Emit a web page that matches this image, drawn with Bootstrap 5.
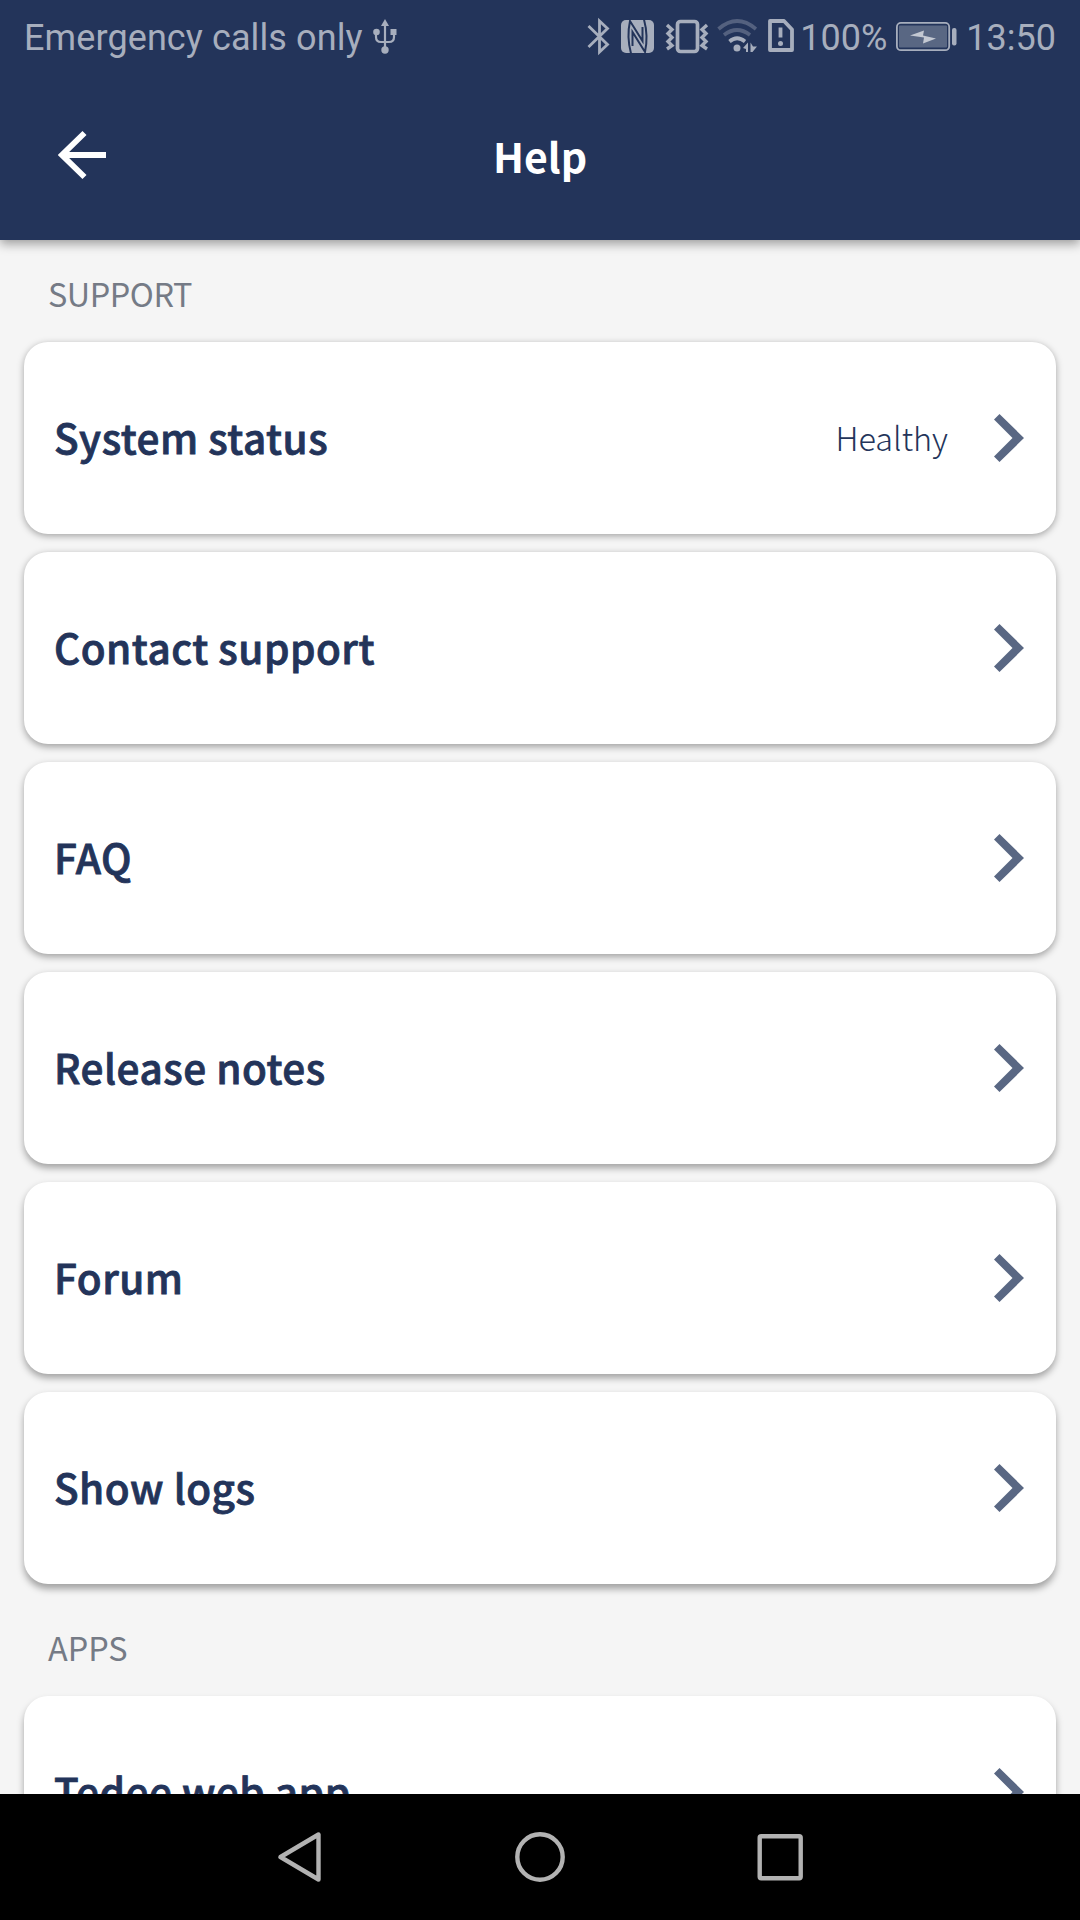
<!DOCTYPE html>
<html lang="en">
<head>
<meta charset="utf-8">
<meta name="viewport" content="width=device-width, initial-scale=1">
<title>Help</title>
<link href="https://cdn.jsdelivr.net/npm/bootstrap@5.3.0/dist/css/bootstrap.min.css" rel="stylesheet">
<style>
:root { --navy: #23345a; --soft: #a7aebd; }
body { background: #f5f5f5; font-family: "Noto Sans CJK SC", "Noto Sans", sans-serif; color: var(--navy); }
svg { display: block; flex: none; }
.screen { width: 1080px; height: 1920px; }
.app-header { background: var(--navy); height: 240px; box-shadow: 0 4px 10px rgba(0,0,0,.36); z-index: 2; }
.status-bar { height: 72px; padding: 0 24px; font: 400 36px/72px Roboto, sans-serif; color: var(--soft); }
.status-bar span { padding-top: 3px; }
.status-bar svg { height: 72px; }
.carrier { letter-spacing: .1px; }
.title-row { display: grid; grid-template-columns: 1fr auto 1fr; height: 168px; padding: 0 58px; }
.page-title { font-size: 41px; font-weight: 700; line-height: 60px; margin: 0; padding-bottom: 3px; }
.back { padding-bottom: 2px; }
.section-label { font-size: 32.4px; line-height: 48px; color: #757b86; padding-left: 24px; }
.first-label { padding-top: 29px; height: 102px; letter-spacing: -.45px; }
.second-label { padding-top: 39px; height: 112px; }
.option { height: 192px; border: 0; border-radius: 24px; padding: 0 32px 0 30px; box-shadow: 0 var(--dy, 2px) 7px rgba(0,0,0,.34); color: inherit; text-decoration: none; }
.option-title { font-size: 40.5px; font-weight: 500; line-height: 60px; padding-bottom: 3px; letter-spacing: .5px; -webkit-text-stroke: .8px var(--navy); }
.option-value { font-size: 32.4px; font-weight: 300; line-height: 48px; margin-right: 46px; padding-bottom: 3px; }
.stack { gap: 18px; }
.stack .option:nth-child(2) { --dy: 2.5px; }
.stack .option:nth-child(3) { --dy: 3px; }
.stack .option:nth-child(4) { --dy: 3.5px; }
.stack .option:nth-child(5) { --dy: 4px; }
.stack .option:nth-child(6) { --dy: 4.5px; }
.stack.apps .option { --dy: 5px; }
.scroll { min-height: 0; padding: 0 24px; }
.system-nav { height: 126px; background: #000; z-index: 2; padding-left: 2px; }
</style>
</head>
<body>
<div class="screen d-flex flex-column overflow-hidden">
  <header class="app-header position-relative flex-shrink-0">
    <div class="status-bar d-flex align-items-center">
      <span class="carrier">Emergency calls only</span>
      <svg width="24" viewBox="0 0 24 72" style="margin-left:10px" fill="none" stroke="#a7aebd" stroke-width="2.2"><path d="M12 24V50M3 33v4q0 5 5 5h8q5 0 5-5v-4"/><g fill="#a7aebd" stroke="none"><path d="M12 19l4 7H8z"/><circle cx="3.500" cy="32" r="3.300"/><path d="M17.500 29h6v6h-6z"/><circle cx="12" cy="50" r="3.700"/></g></svg>
      <div class="d-flex align-items-center ms-auto">
        <svg width="170" viewBox="588 0 170 72" fill="none" stroke="#a7aebd">
          <path d="M589.500 26L608.500 44.500 600.500 52V21L608.500 28.500 589.500 47" stroke-width="2.800"/>
          <rect x="622" y="20" width="33" height="33" rx="5" fill="#a7aebd" stroke="none"/>
          <path d="M632 53.500Q627.500 37 631 21L643.500 41V27M645 19.500Q649.500 36 646 52L633.500 32V46" stroke="#23345a" stroke-width="2"/>
          <rect x="678.500" y="21.500" width="20" height="30" rx="3" stroke-width="3.700"/>
          <path d="M668 25l5 4.500-4 4 4 4-4 4 4 4-5 3.500M708 25l-5 4.500 4 4-4 4 4 4-4 4 5 3.500" stroke-width="3.400"/>
          <path d="M719.500 29Q738 13 757 29M725 35Q738 25 751 35" stroke="#54617f" stroke-width="3.700"/>
          <path d="M730.500 41.500Q738 35 746 41.500" stroke-width="3.700"/>
          <g fill="#a7aebd" stroke="none"><circle cx="738" cy="48" r="3.500"/><path d="M744 48l5-5.500v9.500h-2v-3zM751.500 42.500v9.500h2l4.500-5.500h-4z"/></g>
        </svg>
        <svg width="28" viewBox="767 0 28 72" style="margin-left:10px" fill="none" stroke="#a7aebd" stroke-width="3.800" stroke-linejoin="round"><path d="M770 21h14l8 8.500V50h-22z"/><path d="M780.500 27.500v10"/><circle cx="780.500" cy="43.500" r="2.500" fill="#a7aebd" stroke="none"/></svg>
        <span style="margin-left:5px">100%</span>
        <svg width="62" viewBox="896 0 62 72" style="margin-left:9px" fill="none"><rect x="896.900" y="22.900" width="52.300" height="27.300" rx="4" stroke="#a7aebd" stroke-width="1.800"/><rect x="899" y="25.500" width="48" height="22" rx="1" fill="#596783"/><path d="M910 35.500l14-5-1 5 13 3-13 5 1-6z" fill="#c3c8d2"/><rect x="952" y="28" width="4.500" height="17.500" rx="2" fill="#a7aebd"/></svg>
        <span style="margin-left:8px">13:50</span>
      </div>
    </div>
    <div class="title-row align-items-center text-white">
      <a class="back" href="#" aria-label="Back"><svg width="49" height="50" viewBox="0 0 49 50" fill="none" stroke="#fff" stroke-width="5.800"><path d="M26.500 3L4 25l22.500 22M4 25h44"/></svg></a>
      <h1 class="page-title">Help</h1>
    </div>
  </header>

  <main class="scroll flex-grow-1">
    <div class="section-label first-label">SUPPORT</div>
    <div class="stack d-flex flex-column">
      <a href="#" class="option card flex-row align-items-center"><span class="option-title me-auto">System status</span><span class="option-value">Healthy</span><svg width="30" height="48" viewBox="0 0 30 48"><path d="M5.500 0L30 24 5.500 48 0 42.500 18.500 24 0 5.500z" fill="#596783"/></svg></a>
      <a href="#" class="option card flex-row align-items-center"><span class="option-title me-auto">Contact support</span><svg width="30" height="48" viewBox="0 0 30 48"><path d="M5.500 0L30 24 5.500 48 0 42.500 18.500 24 0 5.500z" fill="#596783"/></svg></a>
      <a href="#" class="option card flex-row align-items-center"><span class="option-title me-auto">FAQ</span><svg width="30" height="48" viewBox="0 0 30 48"><path d="M5.500 0L30 24 5.500 48 0 42.500 18.500 24 0 5.500z" fill="#596783"/></svg></a>
      <a href="#" class="option card flex-row align-items-center"><span class="option-title me-auto">Release notes</span><svg width="30" height="48" viewBox="0 0 30 48"><path d="M5.500 0L30 24 5.500 48 0 42.500 18.500 24 0 5.500z" fill="#596783"/></svg></a>
      <a href="#" class="option card flex-row align-items-center"><span class="option-title me-auto">Forum</span><svg width="30" height="48" viewBox="0 0 30 48"><path d="M5.500 0L30 24 5.500 48 0 42.500 18.500 24 0 5.500z" fill="#596783"/></svg></a>
      <a href="#" class="option card flex-row align-items-center"><span class="option-title me-auto">Show logs</span><svg width="30" height="48" viewBox="0 0 30 48"><path d="M5.500 0L30 24 5.500 48 0 42.500 18.500 24 0 5.500z" fill="#596783"/></svg></a>
    </div>
    <div class="section-label second-label">APPS</div>
    <div class="stack apps d-flex flex-column">
      <a href="#" class="option card flex-row align-items-center"><span class="option-title me-auto">Tedee web app</span><svg width="30" height="48" viewBox="0 0 30 48"><path d="M5.500 0L30 24 5.500 48 0 42.500 18.500 24 0 5.500z" fill="#596783"/></svg></a>
    </div>
  </main>

  <nav class="system-nav position-relative flex-shrink-0 d-flex justify-content-center align-items-center" aria-label="System">
    <svg width="526" height="50" viewBox="278 1832 526 50" fill="none" stroke="#b2b2b2" stroke-width="4.400" stroke-linejoin="round"><path d="M280.500 1857L318.500 1834.500V1879.500z"/><circle cx="540" cy="1857" r="22.700"/><rect x="759.700" y="1836.200" width="41" height="42" rx="1.500"/></svg>
  </nav>
</div>
<script src="https://cdn.jsdelivr.net/npm/bootstrap@5.3.0/dist/js/bootstrap.bundle.min.js"></script>
</body>
</html>
